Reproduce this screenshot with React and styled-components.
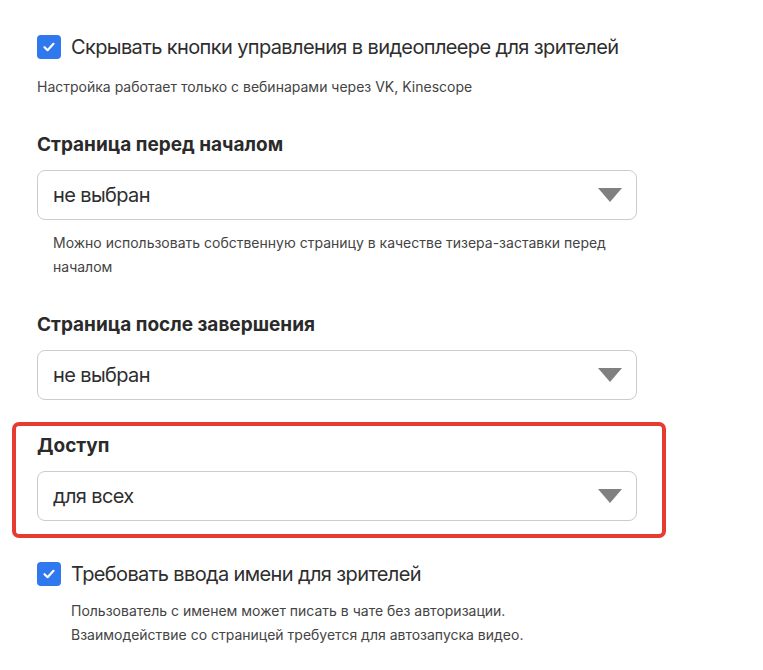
import React from 'react';
import styled, { createGlobalStyle } from 'styled-components';

const GlobalStyle = createGlobalStyle`
  body {
    margin: 0;
    background: #ffffff;
    font-family: Inter, "Noto Sans", sans-serif;
    color: #2b2b2b;
  }
`;

const Column = styled.div`
  width: 600px;
  padding: 35px 0 20px 37px;
`;

const CheckRow = styled.label`
  display: flex;
  align-items: center;
  gap: 10px;
  height: 24px;
  margin-top: ${props => props.$top || 0}px;
`;

const Box = styled.span`
  width: 24px;
  height: 24px;
  border-radius: 4px;
  background: #2f78ee;
  display: flex;
  align-items: center;
  justify-content: center;
  flex-shrink: 0;
`;

const CheckLabel = styled.span`
  font-size: 20px;
  line-height: 24px;
  letter-spacing: -0.62px;
  color: #2e2e2e;
  white-space: nowrap;
`;

const Hint = styled.p`
  margin: ${props => props.$top || 0}px 0 0 ${props => props.$indent || 0}px;
  font-size: 14px;
  line-height: ${props => props.$lh || 20}px;
  color: #444444;
`;

const Heading = styled.h3`
  margin: ${props => props.$top || 0}px 0 0;
  font-size: 19px;
  line-height: 24px;
  font-weight: 650;
  color: #2a2a2a;
`;

const Select = styled.div`
  margin-top: 13px;
  height: 48px;
  border: 1px solid #cccccc;
  border-radius: 8px;
  display: flex;
  align-items: center;
  justify-content: space-between;
  padding: 0 14px 0 15px;
`;

const Value = styled.span`
  font-size: 20px;
  letter-spacing: -0.62px;
  color: #2e2e2e;
`;

const Highlight = styled.div`
  margin: 22px -29px 0 -25px;
  border: 4px solid #e53b30;
  border-radius: 7px;
  padding: 8px 25px 13px 21px;
`;

const Check = () => (
  <Box>
    <svg width="14" height="14" viewBox="0 0 14 14">
      <path d="M2.5 7.2 L5.6 10.2 L11.5 3.8" fill="none" stroke="#fff" strokeWidth="2.2" strokeLinecap="round" strokeLinejoin="round" />
    </svg>
  </Box>
);

const Caret = () => (
  <svg width="24" height="14" viewBox="0 0 24 14">
    <path d="M0 0 H24 L12 14 Z" fill="#808080" />
  </svg>
);

const Field = ({ title, value, top }) => (
  <>
    <Heading $top={top}>{title}</Heading>
    <Select>
      <Value>{value}</Value>
      <Caret />
    </Select>
  </>
);

export default function App() {
  return (
    <>
      <GlobalStyle />
      <Column>
        <CheckRow>
          <Check />
          <CheckLabel>Скрывать кнопки управления в видеоплеере для зрителей</CheckLabel>
        </CheckRow>
        <Hint $top={18}>Настройка работает только с вебинарами через VK, Kinescope</Hint>

        <Field title="Страница перед началом" value="не выбран" top={36} />
        <Hint $top={11} $indent={16} $lh={24}>
          Можно использовать собственную страницу в качестве тизера-заставки перед
          <br />
          началом
        </Hint>

        <Field title="Страница после завершения" value="не выбран" top={34} />

        <Highlight>
          <Field title="Доступ" value="для всех" />
        </Highlight>

        <CheckRow $top={24}>
          <Check />
          <CheckLabel>Требовать ввода имени для зрителей</CheckLabel>
        </CheckRow>
        <Hint $top={13} $indent={34} $lh={24}>
          Пользователь с именем может писать в чате без авторизации.
          <br />
          Взаимодействие со страницей требуется для автозапуска видео.
        </Hint>
      </Column>
    </>
  );
}
